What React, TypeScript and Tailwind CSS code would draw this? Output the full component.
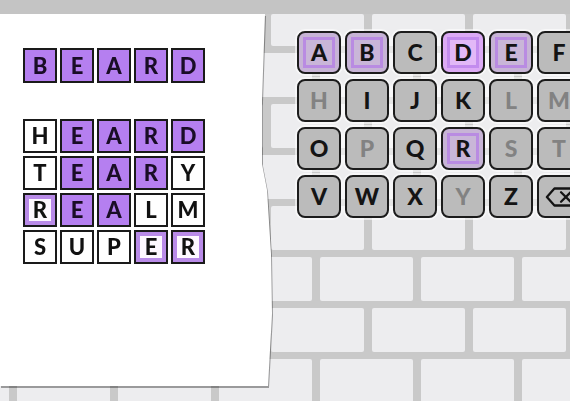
import React from "react";

type TileKind = "full" | "none" | "part";

const font = { fontFamily: "Lato, 'Noto Sans', sans-serif" };

function Tile({ ch, kind, h = "h-[34px]" }: { ch: string; kind: TileKind; h?: string }) {
  const base = `w-[34px] ${h} border-2 border-[#1a1a1a] flex items-center justify-center text-[22px] font-black leading-none`;
  if (kind === "full")
    return <div className={`${base} bg-[#b57ff0] text-[#1a0d26]`}>{ch}</div>;
  if (kind === "part")
    return (
      <div className={`${base} bg-[#fdf8ff] text-[#111] shadow-[inset_0_0_0_4px_#b98be8]`}>{ch}</div>
    );
  return <div className={`${base} bg-white text-[#111]`}>{ch}</div>;
}

const rows: [string, string][] = [
  ["HEARD", "nffff"],
  ["TEARY", "nfffn"],
  ["REALM", "pffnn"],
  ["SUPER", "nnnpp"],
];

function kindOf(c: string): TileKind {
  return c === "f" ? "full" : c === "p" ? "part" : "none";
}

type KeyState = "normal" | "gray" | "part" | "full";
const keys: [string, KeyState][][] = [
  [["A", "part"], ["B", "part"], ["C", "normal"], ["D", "full"], ["E", "part"], ["F", "normal"], ["G", "normal"]],
  [["H", "gray"], ["I", "normal"], ["J", "normal"], ["K", "normal"], ["L", "gray"], ["M", "gray"], ["N", "normal"]],
  [["O", "normal"], ["P", "gray"], ["Q", "normal"], ["R", "part"], ["S", "gray"], ["T", "gray"], ["U", "normal"]],
  [["V", "normal"], ["W", "normal"], ["X", "normal"], ["Y", "gray"], ["Z", "normal"], ["BK", "normal"], ["", "normal"]],
];

function Key({ ch, st }: { ch: string; st: KeyState }) {
  const bg =
    st === "full" ? "bg-[#dcaaf5]" : st === "part" ? "bg-[#c7b4d6]" : "bg-[#bbbbbb]";
  const color = st === "gray" ? "text-[#828282]" : "text-[#141414]";
  return (
    <div
      className={`relative w-[44px] h-[43px] shrink-0 rounded-[8px] border-2 border-[#1c1c1c] ${bg} ${color} flex items-center justify-center text-[23px] font-black leading-none shadow-[0_0_0_2px_rgba(255,255,255,0.55)]`}
    >
      {(st === "part" || st === "full") && (
        <div
          className={`absolute inset-[4px] border-[3px] ${
            st === "full" ? "border-[#c38cee] bg-[#e2b8f7]" : "border-[#b98be2] bg-[#c9b6d8]"
          }`}
        />
      )}
      {ch === "BK" ? (
        <svg width="36" height="24" viewBox="0 0 36 24" className="relative ml-[6px]">
          <path d="M2 12 L10 3 H34 V21 H10 Z" fill="none" stroke="#141414" strokeWidth="2.4" strokeLinejoin="round" />
          <path d="M17 7 L27 17 M27 7 L17 17" stroke="#141414" strokeWidth="2.4" strokeLinecap="round" />
        </svg>
      ) : (
        <span className="relative">{ch}</span>
      )}
    </div>
  );
}

function BrickRow({ offset, h = "h-[44px]" }: { offset: "a" | "b"; h?: string }) {
  return (
    <div className={`flex gap-[8px] ${h} ${offset === "a" ? "ml-[-32px]" : "ml-[-84px]"}`}>
      {Array.from({ length: 8 }).map((_, i) => (
        <div key={i} className="w-[93px] h-full shrink-0 rounded-[2px] bg-[#ededef]" />
      ))}
    </div>
  );
}

export default function App() {
  return (
    <div className="relative w-[570px] h-[401px] overflow-hidden bg-[#c9c9c9]" style={font}>
      {/* wall */}
      <div className="flex flex-col gap-[7px]">
        <div className="h-[14px] bg-[#c4c4c4] mb-[-7px]" />
        <BrickRow offset="a" h="h-[32px]" />
        <BrickRow offset="b" />
        <BrickRow offset="a" />
        <BrickRow offset="b" />
        <BrickRow offset="a" />
        <BrickRow offset="b" />
        <BrickRow offset="a" />
        <BrickRow offset="b" />
      </div>

      {/* paper */}
      <div className="absolute left-0 top-[14px] w-[275px] h-[373px] drop-shadow-[1px_2px_0_rgba(0,0,0,0.35)]">
        <div
          className="w-full h-[372px] bg-white pl-[23px] pt-[34px] flex flex-col"
          style={{
            clipPath:
              "polygon(0 0, 265px 0, 262px 86px, 262px 150px, 267px 176px, 271px 240px, 272px 300px, 268px 372px, 0 372px)",
          }}
        >
          <div className="flex gap-[3px]">
            {"BEARD".split("").map((c, i) => (
              <Tile key={i} ch={c} kind="full" h="h-[35px]" />
            ))}
          </div>
          <div className="mt-[36px] flex flex-col gap-[3px]">
            {rows.map(([w, k], r) => (
              <div key={r} className="flex gap-[3px]">
                {w.split("").map((c, i) => (
                  <Tile key={i} ch={c} kind={kindOf(k[i])} />
                ))}
              </div>
            ))}
          </div>
        </div>
      </div>

      {/* keyboard */}
      <div className="absolute left-[297px] top-[31px] flex flex-col gap-[5px]">
        {keys.map((row, r) => (
          <div key={r} className="flex gap-[4px]">
            {row.map(([c, s], i) => (
              <Key key={i} ch={c} st={s} />
            ))}
          </div>
        ))}
      </div>
    </div>
  );
}
